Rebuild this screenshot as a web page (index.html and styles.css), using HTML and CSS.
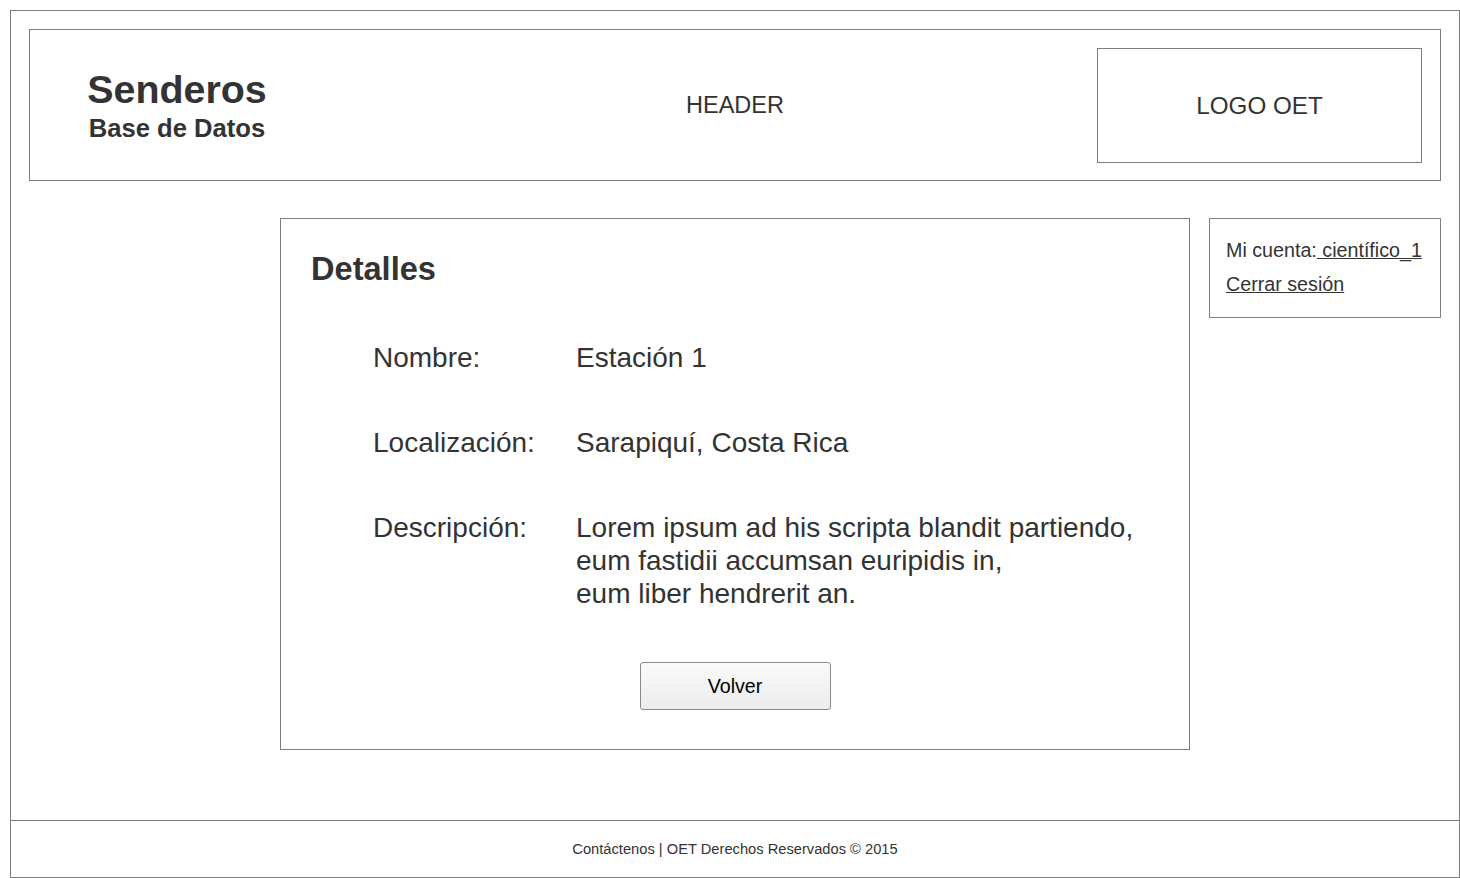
FILE: index.html
```html
<!DOCTYPE html>
<html lang="es">
<head>
<meta charset="utf-8">
<title>Senderos - Detalles</title>
<link rel="stylesheet" href="styles.css">
</head>
<body>
<div class="frame">
  <header class="header">
    <div class="brand">
      <div class="brand-title">Senderos</div>
      <div class="brand-sub">Base de Datos</div>
    </div>
    <div class="header-label">HEADER</div>
    <div class="logo-cell"><div class="logo">LOGO OET</div></div>
  </header>

  <main class="main">
    <section class="details">
      <h1 class="details-title">Detalles</h1>
      <div class="rows">
        <div class="row"><div class="label">Nombre:</div><div class="value">Estación 1</div></div>
        <div class="row"><div class="label">Localización:</div><div class="value">Sarapiquí, Costa Rica</div></div>
        <div class="row"><div class="label">Descripción:</div><div class="value">Lorem ipsum ad his scripta blandit partiendo,<br>eum fastidii accumsan euripidis in,<br>eum liber hendrerit an.</div></div>
      </div>
      <div class="actions"><button class="btn" type="button">Volver</button></div>
    </section>
    <aside class="account">
      <div class="account-line">Mi cuenta:<a href="#" class="link"> científico_1</a></div>
      <div class="account-line"><a href="#" class="link">Cerrar sesión</a></div>
    </aside>
  </main>

  <footer class="footer">Contáctenos | OET Derechos Reservados © 2015</footer>
</div>
</body>
</html>
```

FILE: styles.css
```css
* { box-sizing: border-box; }

html, body {
  margin: 0;
  padding: 0;
  background: #ffffff;
}

body {
  font-family: "Liberation Sans", Arial, sans-serif;
  color: #333333;
}

.frame {
  margin: 10px 0 0 10px;
  width: 1450px;
  height: 868px;
  border: 1px solid #7f7f7f;
  display: flex;
  flex-direction: column;
}

.header {
  margin: 18px 18px 0 18px;
  height: 152px;
  border: 1px solid #7f7f7f;
  padding: 18px 18px 17px 18px;
  display: grid;
  grid-template-columns: 1fr auto 1fr;
  align-items: center;
}

.brand {
  width: 240px;
  margin-left: 9px;
  text-align: center;
  font-weight: bold;
}

.brand-title {
  font-size: 39.4px;
  line-height: 40px;
}

.brand-sub {
  font-size: 25.6px;
  line-height: 30px;
  margin-top: 4px;
}

.header-label {
  font-size: 23.5px;
}

.logo-cell {
  display: flex;
  justify-content: flex-end;
}

.logo {
  width: 325px;
  height: 115px;
  border: 1px solid #7f7f7f;
  display: flex;
  align-items: center;
  justify-content: center;
  font-size: 24.2px;
}

.main {
  flex: 1;
  display: flex;
  justify-content: flex-end;
  align-items: flex-start;
  gap: 19px;
  padding: 37px 18px 0 0;
}

.details {
  width: 910px;
  height: 532px;
  border: 1px solid #7f7f7f;
  padding: 32px 30px 0 30px;
}

.details-title {
  margin: 0;
  font-size: 32.6px;
  line-height: 36px;
  font-weight: bold;
}

.rows {
  margin-top: 54px;
  padding-left: 62px;
  display: flex;
  flex-direction: column;
  gap: 52px;
}

.row {
  display: flex;
  font-size: 28px;
  line-height: 33px;
}

.label {
  width: 203px;
  flex: none;
}

.actions {
  margin-top: 52px;
  display: flex;
  justify-content: center;
  margin-left: -30px;
  margin-right: -30px;
}

.btn {
  width: 191px;
  height: 48px;
  border: 1px solid #8a8a8a;
  border-radius: 3px;
  background: linear-gradient(#fafafa, #ececec);
  font-family: "Liberation Sans", Arial, sans-serif;
  font-size: 19.7px;
  color: #000000;
  padding: 0;
}

.account {
  width: 232px;
  height: 100px;
  border: 1px solid #7f7f7f;
  padding: 14px 0 0 16px;
}

.account-line {
  font-size: 19.7px;
  line-height: 34px;
  white-space: nowrap;
}

.link {
  color: #333333;
  text-decoration: underline;
}

.footer {
  height: 57px;
  border-top: 1px solid #7f7f7f;
  display: flex;
  align-items: center;
  justify-content: center;
  font-size: 14.7px;
}
```
